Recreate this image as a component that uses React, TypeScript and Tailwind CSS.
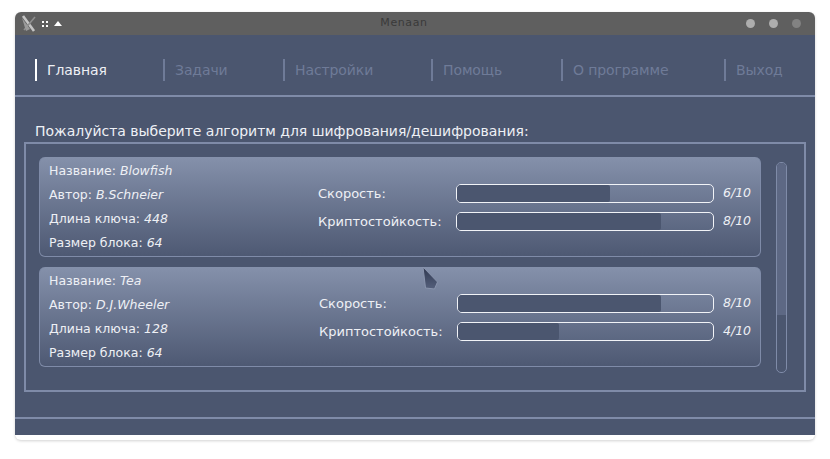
const navItems = [
  { label: "Главная", active: true, w: "w-[128px]" },
  { label: "Задачи", active: false, w: "w-[120px]" },
  { label: "Настройки", active: false, w: "w-[148px]" },
  { label: "Помощь", active: false, w: "w-[130px]" },
  { label: "О программе", active: false, w: "w-[163px]" },
  { label: "Выход", active: false, w: "w-[70px]" },
];

function Info({ k, v }: { k: string; v: string }) {
  return (
    <div className="h-6 leading-6 whitespace-nowrap text-[12.5px]">
      {k}: <i>{v}</i>
    </div>
  );
}

function Meter({ label, value, barW }: { label: string; value: number; barW: string }) {
  return (
    <div className="flex items-center h-[19px]">
      <div className="w-[138px] whitespace-nowrap">{label}:</div>
      <div className={`${barW} h-[19px] rounded-[5px] border border-[#f1f3f7] overflow-hidden`}>
        <div className="h-full bg-[#4b566f] rounded-r-[2px]" style={{ width: `calc(${value * 10}% - 1px)` }} />
      </div>
      <i className="ml-[9px] text-[12.5px]">{value}/10</i>
    </div>
  );
}

function Card({ name, author, key_, block, speed, strength, shift, barW }: {
  name: string; author: string; key_: string; block: string; speed: number; strength: number; shift: string; barW: string;
}) {
  return (
    <div className="h-[100px] rounded-[6px] border-r border-b border-l border-[#7f8ba8] bg-gradient-to-b from-[#8591ab] to-[#4e5973] flex pl-[9px] text-[13px] text-[#eef0f5]">
      <div className="w-[269px] pt-[2px]">
        <Info k="Название" v={name} />
        <Info k="Автор" v={author} />
        <Info k="Длина ключа" v={key_} />
        <Info k="Размер блока" v={block} />
      </div>
      <div className={`${shift} pt-[27px] flex flex-col gap-[9px]`}>
        <Meter label="Скорость" value={speed} barW={barW} />
        <Meter label="Криптостойкость" value={strength} barW={barW} />
      </div>
    </div>
  );
}

export default function App() {
  return (
    <div className="w-[830px] h-[459px] bg-white pt-[12px] pl-[15px] overflow-hidden font-['DejaVu_Sans','Liberation_Sans',sans-serif]">
      <div className="w-[800px] h-[428px] bg-white rounded-[6px] shadow-[0_1px_3px_rgba(0,0,0,0.18)]">
        <div className="h-[23px] bg-[#5f5f5f] rounded-t-[6px] flex items-center pl-[6px] pr-[14px]">
          <svg width="17" height="18" viewBox="0 0 17 18" className="shrink-0">
            <path d="M2 1 L13 16" stroke="#c4c4c4" strokeWidth="2.6" fill="none" />
            <path d="M14 2 L3 15" stroke="#8f8f8f" strokeWidth="1.6" fill="none" />
            <path d="M1 3 L9 14 L5 16 Z" fill="#9a9a9a" />
          </svg>
          <div className="ml-[4px] grid grid-cols-2 gap-[2px] w-[6px] shrink-0">
            <span className="w-[2px] h-[2px] bg-white" />
            <span className="w-[2px] h-[2px] bg-white" />
            <span className="w-[2px] h-[2px] bg-white" />
            <span className="w-[2px] h-[2px] bg-white" />
          </div>
          <svg width="8" height="5" viewBox="0 0 8 5" className="ml-[6px] shrink-0">
            <path d="M4 0 L8 5 L0 5 Z" fill="#ffffff" />
          </svg>
          <div className="flex-1 text-center text-[11px] tracking-[0.6px] text-[#3a3a3a]">Menaan</div>
          <div className="flex items-center gap-[14px]">
            <span className="w-[9px] h-[9px] rounded-full bg-[#adadad]" />
            <span className="w-[9px] h-[9px] rounded-full bg-[#adadad]" />
            <span className="w-[9px] h-[9px] rounded-full bg-[#828282]" />
          </div>
        </div>
        <div className="h-[400px] bg-[#4b566f]">
          <div className="h-[62px] pt-[24px] pl-[20px] border-b-2 border-[#7f8ba8] flex">
            {navItems.map((n) => (
              <div key={n.label} className={`${n.w} h-[22px] flex items-center border-l-2 pl-[10px] text-[14px] tracking-[-0.1px] whitespace-nowrap ${n.active ? "border-white text-[#eef0f5]" : "border-[#6f7b98] text-[#6f7b98]"}`}>
                {n.label}
              </div>
            ))}
          </div>
          <div className="pl-[20px] mt-[24px] h-[20px] leading-[20px] text-[14px] text-[#eef0f5] tracking-[-0.02px] whitespace-nowrap">
            Пожалуйста выберите алгоритм для шифрования/дешифрования:
          </div>
          <div className="relative ml-[9px] mt-[1px] w-[782px] h-[250px] border-2 border-[#7f8ba8] flex pl-[13px] pt-[13px]">
            <div className="w-[722px] flex flex-col gap-[10px]">
              <Card name="Blowfish" author="B.Schneier" key_="448" block="64" speed={6} strength={8} shift="" barW="w-[258px]" />
              <Card name="Tea" author="D.J.Wheeler" key_="128" block="64" speed={8} strength={4} shift="ml-[1px]" barW="w-[257px]" />
            </div>
            <div className="ml-[15px] mt-[5px] w-[11px] h-[211px] rounded-[5px] border border-[#7f8ba8] overflow-hidden">
              <div className="h-[152px] bg-[#5d6884]" />
            </div>
            <svg width="18" height="24" viewBox="0 0 18 24" className="absolute left-[396px] top-[122px]">
              <defs>
                <linearGradient id="cur" x1="0" y1="0" x2="0" y2="1">
                  <stop offset="0" stopColor="#2f3850" />
                  <stop offset="1" stopColor="#55607c" />
                </linearGradient>
              </defs>
              <path d="M1 1 L15.5 16 L12.5 23 L3.5 22 Z" fill="url(#cur)" stroke="#8a95ae" strokeWidth="1" />
            </svg>
          </div>
          <div className="mt-[25px] h-[2px] bg-[#7f8ba8]" />
        </div>
      </div>
    </div>
  );
}
